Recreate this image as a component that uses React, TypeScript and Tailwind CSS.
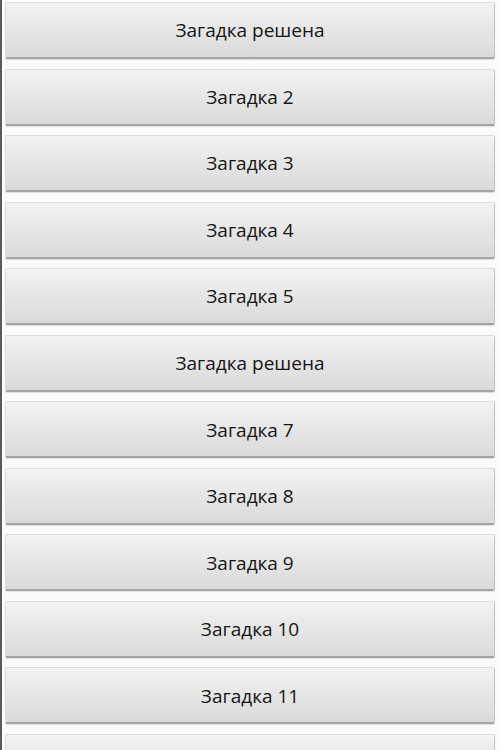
import React from "react";

const items = [
  "Загадка решена",
  "Загадка 2",
  "Загадка 3",
  "Загадка 4",
  "Загадка 5",
  "Загадка решена",
  "Загадка 7",
  "Загадка 8",
  "Загадка 9",
  "Загадка 10",
  "Загадка 11",
  "",
];

export default function App() {
  return (
    <div className="w-[500px] h-[750px] overflow-hidden bg-[#fbfbfb] flex" style={{ fontFamily: "'Open Sans', 'Noto Sans', sans-serif" }}>
      <div className="w-[2px] h-full bg-[#5a5a5a] shrink-0" />
      <div className="flex-1 flex flex-col gap-[9.55px] pt-[2px] pl-[3px] pr-[5px]">
        {items.map((t, i) => (
          <div
            key={i}
            className="h-[57px] shrink-0 flex items-center justify-center pt-[1px] rounded-[2px] bg-gradient-to-b from-[#f3f3f3] via-[#e6e6e6] to-[#dadada] border border-[#dedede] border-b-[2px] border-b-[#a5a5a5] border-r-[#c2c2c2] shadow-[0_1px_1px_rgba(0,0,0,0.12)] text-[19px] text-[#161616]"
          >
            {t}
          </div>
        ))}
      </div>
    </div>
  );
}
